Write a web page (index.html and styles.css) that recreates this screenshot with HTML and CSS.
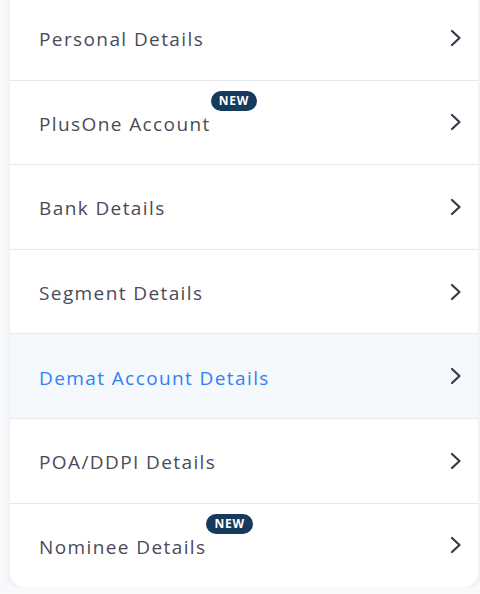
FILE: index.html
```html
<!DOCTYPE html>
<html>
<head>
<meta charset="utf-8">
<link rel="stylesheet" href="styles.css">
</head>
<body>
<div class="card">
  <div class="row"><span class="label">Personal Details</span><svg class="chev" viewBox="0 0 12 18"><path d="M2 2 L9.5 9 L2 16"/></svg></div>
  <div class="row"><span class="label">PlusOne Account<span class="badge">NEW</span></span><svg class="chev" viewBox="0 0 12 18"><path d="M2 2 L9.5 9 L2 16"/></svg></div>
  <div class="row"><span class="label">Bank Details</span><svg class="chev" viewBox="0 0 12 18"><path d="M2 2 L9.5 9 L2 16"/></svg></div>
  <div class="row"><span class="label">Segment Details</span><svg class="chev" viewBox="0 0 12 18"><path d="M2 2 L9.5 9 L2 16"/></svg></div>
  <div class="row active"><span class="label">Demat Account Details</span><svg class="chev" viewBox="0 0 12 18"><path d="M2 2 L9.5 9 L2 16"/></svg></div>
  <div class="row"><span class="label">POA/DDPI Details</span><svg class="chev" viewBox="0 0 12 18"><path d="M2 2 L9.5 9 L2 16"/></svg></div>
  <div class="row last"><span class="label">Nominee Details<span class="badge">NEW</span></span><svg class="chev" viewBox="0 0 12 18"><path d="M2 2 L9.5 9 L2 16"/></svg></div>
</div>
</body>
</html>
```
FILE: styles.css
```css
html, body {
  margin: 0;
  padding: 0;
  background: #f8f9fb;
  overflow: hidden;
}
body {
  font-family: "Open Sans", "Liberation Sans", sans-serif;
}
.card {
  margin: -4px 2px 0 10px;
  background: #fff;
  border-radius: 0 0 14px 14px;
  box-shadow: 0 2px 8px rgba(30, 50, 90, 0.08);
  overflow: hidden;
}
.row {
  height: 83.6px;
  border-bottom: 1px solid #e6e9ee;
  display: flex;
  align-items: center;
  justify-content: space-between;
  padding: 0 16px 0 29px;
}
.row.last {
  border-bottom: none;
  height: 83px;
}
.row.active {
  background: #f5f9fe;
}
.label {
  position: relative;
  font-size: 19px;
  color: #4b4a58;
  letter-spacing: 1.4px;
  padding-top: 3px;
}
.row.active .label {
  color: #2f80f5;
}
.badge {
  position: absolute;
  left: 100%;
  top: -17px;
  height: 20px;
  line-height: 20px;
  padding: 0 8px;
  border-radius: 10px;
  background: #163a5e;
  color: #fff;
  font-size: 12px;
  font-weight: 700;
  letter-spacing: 0.8px;
}
.chev {
  width: 12px;
  height: 18px;
  fill: none;
  stroke: #383846;
  stroke-width: 2.2;
  stroke-linecap: round;
  stroke-linejoin: round;
}
```
